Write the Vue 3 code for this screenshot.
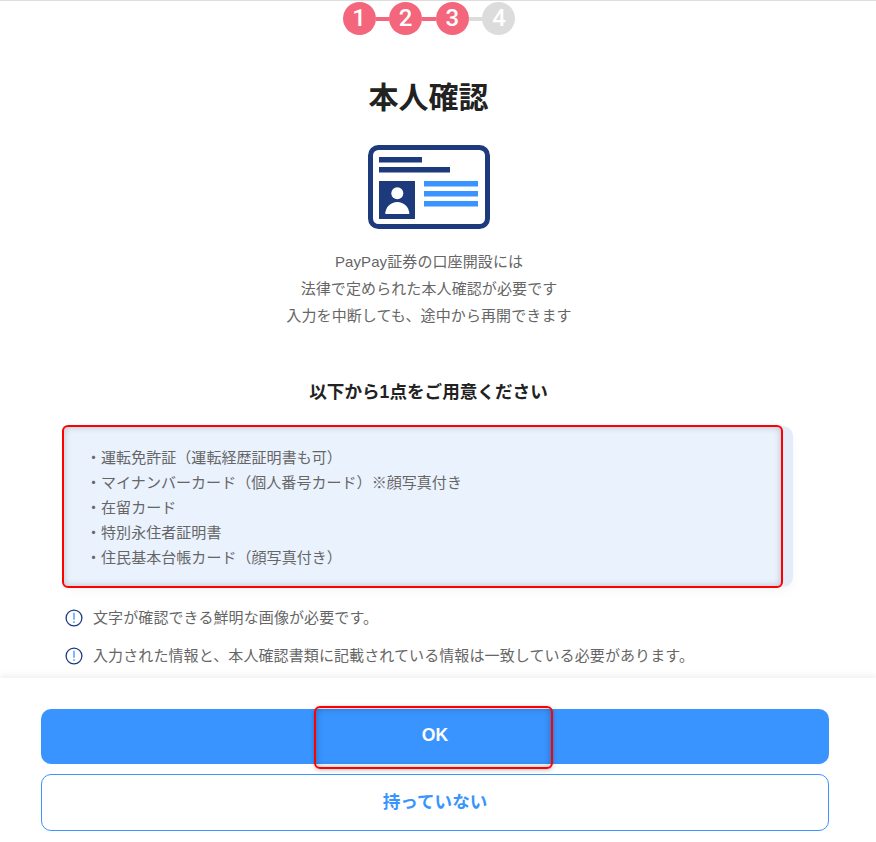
<template>
  <div class="page">
    <main class="content">
      <ol class="steps">
        <template v-for="(step, i) in steps" :key="step">
          <li v-if="i > 0" class="bar" :class="{ on: step <= current }"></li>
          <li class="dot" :class="{ on: step <= current }">{{ step }}</li>
        </template>
      </ol>

      <h1 class="title">本人確認</h1>

      <svg class="card-icon" width="122" height="84" viewBox="0 0 122 84">
        <rect x="2.5" y="2.5" width="117" height="79" rx="8" fill="#fff" stroke="#1c3a7c" stroke-width="5" />
        <rect x="11" y="12" width="43" height="5.5" fill="#1c3a7c" />
        <rect x="11" y="22" width="71" height="5.5" fill="#1c3a7c" />
        <rect x="11" y="36" width="36" height="38" fill="#1c3a7c" />
        <circle cx="29.3" cy="48.3" r="6" fill="#fff" />
        <path d="M17.3 69a12 12 0 0 1 24 0z" fill="#fff" />
        <rect x="56" y="36" width="54" height="5.5" fill="#3994ff" />
        <rect x="56" y="46" width="54" height="5.5" fill="#3994ff" />
        <rect x="56" y="56" width="54" height="5.5" fill="#3994ff" />
      </svg>

      <p class="lead">
        PayPay証券の口座開設には<br />
        法律で定められた本人確認が必要です<br />
        入力を中断しても、途中から再開できます
      </p>

      <h2 class="subtitle">以下から1点をご用意ください</h2>

      <div class="doc-box">
        <div class="mark mark-box"></div>
        <ul class="doc-list">
          <li v-for="doc in documents" :key="doc">・{{ doc }}</li>
        </ul>
      </div>

      <ul class="notes">
        <li v-for="note in notes" :key="note">
          <svg width="18" height="18" viewBox="0 0 18 18">
            <circle cx="9" cy="9" r="7.9" fill="none" stroke="#1c3a7c" stroke-width="1.3" />
            <path d="M9 3.8v7M9 12.3v1.7" fill="none" stroke="#3994ff" stroke-width="1.3" />
          </svg>
          <span>{{ note }}</span>
        </li>
      </ul>
    </main>

    <footer class="actions">
      <button class="btn primary">
        <span class="mark mark-btn"></span>
        <span class="btn-label">OK</span>
      </button>
      <button class="btn secondary">持っていない</button>
    </footer>
  </div>
</template>

<script setup>
const steps = [1, 2, 3, 4]
const current = 3

const documents = [
  '運転免許証（運転経歴証明書も可）',
  'マイナンバーカード（個人番号カード）※顔写真付き',
  '在留カード',
  '特別永住者証明書',
  '住民基本台帳カード（顔写真付き）'
]

const notes = [
  '文字が確認できる鮮明な画像が必要です。',
  '入力された情報と、本人確認書類に記載されている情報は一致している必要があります。'
]
</script>

<style scoped>
.page {
  width: 876px;
  height: 842px;
  display: flex;
  flex-direction: column;
  overflow: hidden;
  background: #fff;
  border-top: 1px solid #dedede;
  box-sizing: border-box;
  font-family: "Liberation Sans", "Noto Sans CJK JP", sans-serif;
  color: #666;
}

.content {
  flex: 1;
  min-height: 0;
  width: 857px;
  padding-top: 1px;
  display: flex;
  flex-direction: column;
  align-items: center;
  overflow: hidden;
}

.content > * {
  flex: none;
}

.steps {
  display: flex;
  align-items: center;
  list-style: none;
  margin: 0 0 0 1px;
  padding: 0;
}

.dot {
  width: 33px;
  height: 33px;
  border-radius: 50%;
  background: #dcdcdc;
  color: #fff;
  font-family: Roboto, sans-serif;
  font-size: 24px;
  font-weight: 500;
  line-height: 33px;
  text-align: center;
}

.dot.on,
.bar.on {
  background: #f4667b;
}

.bar {
  width: 13.67px;
  height: 4px;
  background: #dcdcdc;
}

.title {
  margin: 41px 0 0;
  font-size: 30px;
  line-height: 44px;
  font-weight: 700;
  color: #222;
}

.card-icon {
  display: block;
  margin: 25px 0 0 1px;
}

.lead {
  margin: 19px 0 0 1px;
  font-size: 15px;
  letter-spacing: 0.1px;
  line-height: 27px;
  text-align: center;
}

.subtitle {
  margin: 50px 0 0;
  font-size: 17.6px;
  line-height: 26px;
  font-weight: 700;
  color: #222;
}

.doc-box {
  position: relative;
  width: 730px;
  height: 161px;
  margin: 21px 1px 0 0;
  box-sizing: border-box;
  padding: 19px 23px 0;
  border-radius: 10px;
  background: #e4ecf9;
  box-shadow: 0 4px 10px rgba(0, 0, 0, 0.04);
}

.doc-list {
  position: relative;
  list-style: none;
  margin: 0;
  padding: 0;
  font-size: 15px;
  letter-spacing: 0.05px;
  line-height: 25px;
}

.mark {
  position: absolute;
  box-sizing: border-box;
  border: 2px solid #f00;
  border-radius: 6px;
}

.mark-box {
  left: -1px;
  top: -1px;
  width: 721px;
  height: 163px;
  background: #eaf2fe;
  box-shadow: inset 0 0 7px rgba(0, 0, 0, 0.22);
}

.notes {
  list-style: none;
  align-self: flex-start;
  margin: 18px 0 0 65px;
  padding: 0;
  font-size: 15px;
  letter-spacing: 0.1px;
  line-height: 26px;
}

.notes li {
  display: flex;
  align-items: center;
  gap: 10px;
  margin-bottom: 12px;
}

.notes svg {
  flex: none;
}

.actions {
  flex: none;
  height: 164px;
  box-sizing: border-box;
  padding: 31px 47px 0 41px;
  display: flex;
  flex-direction: column;
  gap: 10px;
  background: #fff;
  box-shadow: 0 -3px 6px rgba(0, 0, 0, 0.06);
  position: relative;
}

.btn {
  display: block;
  width: 100%;
  box-sizing: border-box;
  border-radius: 10px;
  font-family: inherit;
  font-size: 17.6px;
  font-weight: 700;
  padding: 0;
}

.primary {
  position: relative;
  height: 55px;
  border: none;
  padding-bottom: 2px;
  background: #3994ff;
  color: #fff;
}

.btn-label {
  position: relative;
}

.mark-btn {
  left: 273px;
  top: -3px;
  width: 239px;
  height: 63px;
  box-shadow: inset 0 0 7px rgba(0, 0, 0, 0.3), 0 1px 4px rgba(0, 0, 0, 0.25);
}

.secondary {
  height: 57px;
  border: 1px solid #3994ff;
  padding-bottom: 5px;
  background: #fff;
  color: #3994ff;
}
</style>

<style>
html,
body {
  margin: 0;
  background: #fff;
}
</style>
